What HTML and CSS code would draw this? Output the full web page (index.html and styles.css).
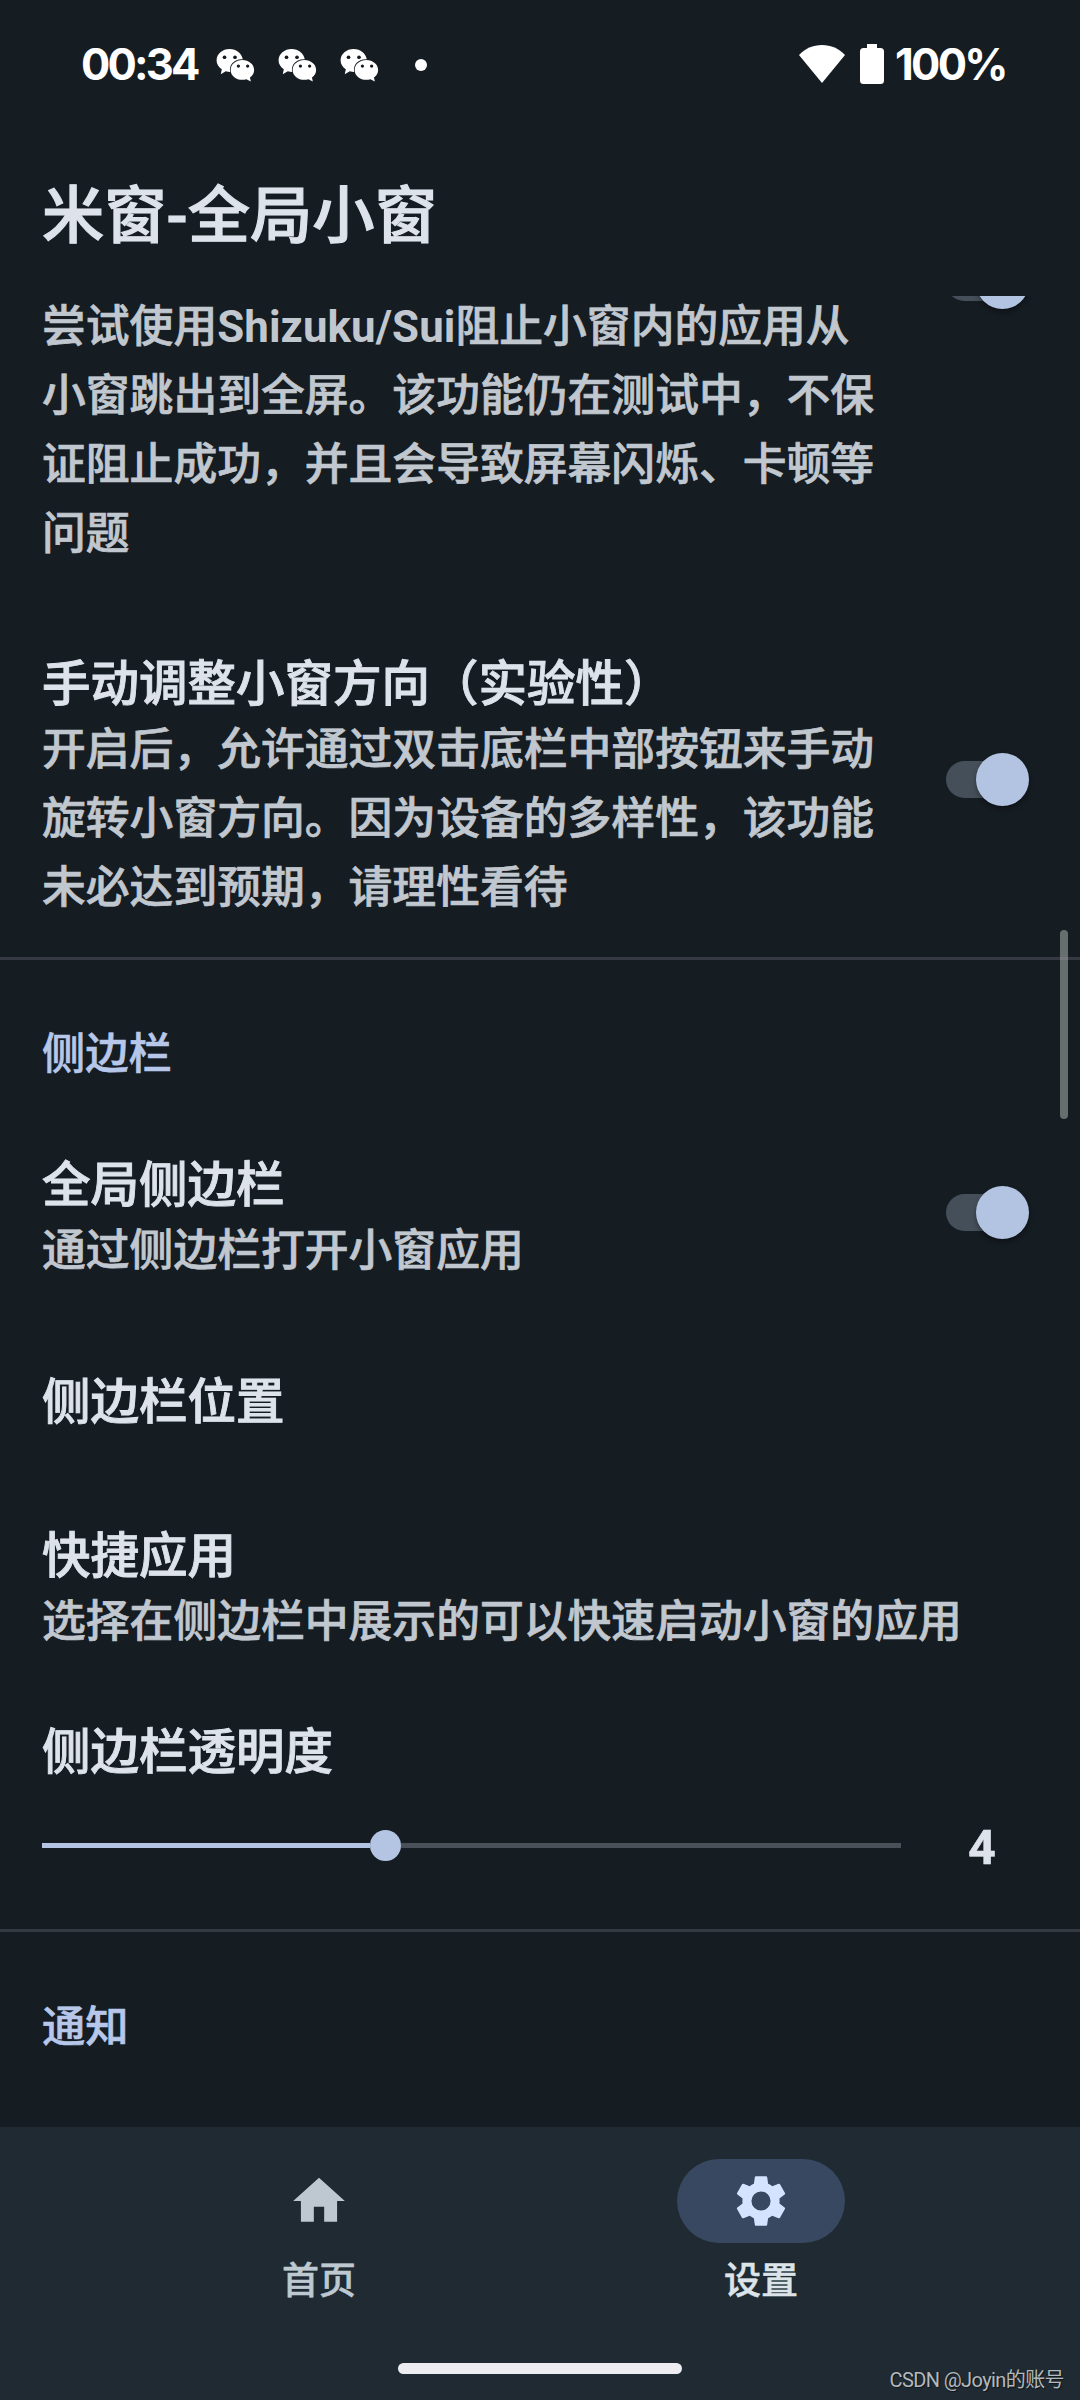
FILE: index.html
```html
<!DOCTYPE html>
<html lang="zh-CN">
<head>
<meta charset="utf-8">
<title>米窗-全局小窗</title>
<link rel="stylesheet" href="styles.css">
</head>
<body>
<svg class="defs" width="0" height="0">
  <symbol id="wechat" viewBox="0 0 39 34">
    <path fill="#fff" d="M13.500 0C6 0 0 5 0 11.700c0 3.800 2 7 5.400 9.200L4.300 26l5.200-3c1.500.400 3 .600 4.500.600C12.500 16 18.500 10 27 10.600 26 4.500 20.500 0 13.500 0z"/>
    <path fill="#fff" d="M26.500 11.400c-6.700 0-12 4.500-12 10.200s5.300 10.200 12 10.200c1.500 0 2.900-.200 4.200-.600l4.600 2.300-.900-4.100c2.700-1.900 4.300-4.700 4.300-7.800 0-5.700-5.400-10.200-12.200-10.200z"/>
    <g fill="#151c22"><circle cx="8.200" cy="8.500" r="1.900"/><circle cx="19" cy="8.500" r="1.900"/><circle cx="22.500" cy="17.600" r="1.700"/><circle cx="32" cy="17.600" r="1.700"/></g>
  </symbol>
</svg>
<div class="screen">
  <header class="status">
    <span class="clock">00:34</span>
    <div class="notices">
      <svg class="wechat"><use href="#wechat"/></svg>
      <svg class="wechat"><use href="#wechat"/></svg>
      <svg class="wechat"><use href="#wechat"/></svg>
    </div>
    <span class="more"></span>
    <div class="system">
      <svg class="wifi" viewBox="0 0 46 38"><path fill="#fff" d="M0 10C6 3.500 14 0 23 0s17 3.500 23 10L23 38z"/></svg>
      <svg class="battery" viewBox="0 0 24 40"><path fill="#fff" d="M7 0h10v4h3.500A3.500 3.500 0 0 1 24 7.500v29a3.500 3.500 0 0 1-3.500 3.500h-17A3.500 3.500 0 0 1 0 36.500v-29A3.500 3.500 0 0 1 3.500 4H7z"/></svg>
      <span class="percent">100%</span>
    </div>
  </header>
  <h1 class="title">米窗-全局小窗</h1>
  <main class="list">
    <section class="item item-first">
      <div class="text">
        <p class="desc">尝试使用<span class="latin">Shizuku/Sui</span>阻止小窗内的应用从<br>小窗跳出到全屏。该功能仍在测试中，不保<br>证阻止成功，并且会导致屏幕闪烁、卡顿等<br>问题</p>
      </div>
      <span class="toggle"></span>
    </section>
    <section class="item item-rotate">
      <div class="text">
        <h2 class="name">手动调整小窗方向（实验性）</h2>
        <p class="desc">开启后，允许通过双击底栏中部按钮来手动<br>旋转小窗方向。因为设备的多样性，该功能<br>未必达到预期，请理性看待</p>
      </div>
      <span class="toggle"></span>
    </section>
    <hr class="divider divider-a">
    <h3 class="group">侧边栏</h3>
    <section class="item item-sidebar">
      <div class="text">
        <h2 class="name">全局侧边栏</h2>
        <p class="desc">通过侧边栏打开小窗应用</p>
      </div>
      <span class="toggle"></span>
    </section>
    <section class="item item-position"><h2 class="name">侧边栏位置</h2></section>
    <section class="item item-apps">
      <div class="text">
        <h2 class="name">快捷应用</h2>
        <p class="desc">选择在侧边栏中展示的可以快速启动小窗的应用</p>
      </div>
    </section>
    <section class="item item-opacity"><h2 class="name">侧边栏透明度</h2></section>
    <div class="slider">
      <div class="rail"><span class="fill"></span><span class="knob"></span><span class="rest"></span></div>
      <span class="value">4</span>
    </div>
    <hr class="divider divider-b">
    <h3 class="group">通知</h3>
    <span class="scrollbar"></span>
  </main>
  <nav class="nav">
    <div class="tabs">
      <div class="tab">
        <span class="pill"><svg class="icon" viewBox="0 0 24 24"><path d="M10 20v-5.800h4V20h5v-8h3L12 3 2 12h3v8z"/></svg></span>
        <span class="tab-label">首页</span>
      </div>
      <div class="tab active">
        <span class="pill"><svg class="icon" viewBox="0 0 24 24"><path d="M19.140 12.940c.04-.300.060-.610.060-.940 0-.320-.020-.640-.070-.940l2.030-1.580a.490.490 0 0 0 .120-.610l-1.920-3.320a.488.488 0 0 0-.590-.220l-2.390.960c-.500-.380-1.030-.700-1.620-.940l-.360-2.540a.484.484 0 0 0-.480-.410h-3.840c-.240 0-.430.170-.470.410l-.360 2.540c-.590.240-1.130.570-1.620.940l-2.390-.960c-.220-.080-.470 0-.590.220L2.740 8.870c-.120.210-.080.470.120.610l2.030 1.580c-.050.300-.090.630-.090.940s.020.640.070.940l-2.030 1.580a.490.490 0 0 0-.120.610l1.920 3.320c.120.220.370.290.590.220l2.390-.960c.500.380 1.030.700 1.620.940l.360 2.540c.050.240.240.410.480.410h3.840c.240 0 .440-.170.470-.410l.360-2.540c.590-.240 1.130-.560 1.620-.940l2.390.960c.220.080.470 0 .590-.220l1.920-3.320c.120-.220.070-.470-.120-.610zM12 15.700a3.700 3.700 0 1 1 0-7.400 3.700 3.700 0 0 1 0 7.400z"/></svg></span>
        <span class="tab-label">设置</span>
      </div>
    </div>
    <span class="gesture"></span>
    <span class="watermark">CSDN @Joyin的账号</span>
  </nav>
</div>
</body>
</html>
```
FILE: styles.css
```css
* { box-sizing: border-box; margin: 0; padding: 0; }
body { background: #151c22; font-family: Roboto, "Noto Sans CJK SC", sans-serif; }
.defs { position: absolute; }
.screen { width: 1080px; height: 2400px; overflow: hidden; display: flex; flex-direction: column; }

.status { height: 128px; padding: 0 75px 0 81px; display: flex; align-items: center; color: #fff; font: 650 43.500px/50px Inter, sans-serif; }
.clock { width: 135px; letter-spacing: -2.800px; white-space: nowrap; }
.notices { display: flex; gap: 23px; padding-top: 2px; }
.wechat { width: 39px; height: 33px; display: block; }
.more { width: 12px; height: 12px; border-radius: 50%; background: #fff; margin: 2px 0 0 36px; }
.system { margin-left: auto; display: flex; align-items: center; }
.wifi { width: 46px; height: 38px; margin-right: 15px; }
.battery { width: 24px; height: 40px; margin-right: 11px; }
.percent { width: 110px; letter-spacing: -2.700px; white-space: nowrap; }

.title { height: 168px; padding: 47px 42px 0; color: #dee3eb; font-size: 62.300px; font-weight: 500; line-height: 84px; -webkit-text-stroke: 1.100px; }

.list { position: relative; height: 1831px; overflow: hidden; display: flex; flex-direction: column; flex: none; }
.item { display: flex; align-items: center; justify-content: space-between; padding: 0 51px 0 42px; flex: none; }
.name { color: #dee3eb; font-size: 48.500px; font-weight: 500; line-height: 63px; white-space: nowrap; -webkit-text-stroke: .9px; }
.desc { color: #c1c7ce; font-size: 43.800px; font-weight: 500; line-height: 69px; white-space: nowrap; -webkit-text-stroke: .7px; }
.latin { font-weight: 700; letter-spacing: .1px; -webkit-text-stroke: 0; }
.item-first { margin-top: -3px; align-items: flex-start; }
.item-first .toggle { margin-top: -37px; }
.item-rotate { margin-top: 84px; }
.item-rotate .toggle { margin-top: -17px; }
.item-sidebar { margin-top: 65px; }
.item-position { margin-top: 85px; }
.item-apps { margin-top: 91px; }
.item-opacity { margin-top: 64px; }

.toggle { width: 83px; height: 53px; margin-top: -16px; display: flex; align-items: center; justify-content: flex-end; flex: none; }
.toggle::before { content: ""; width: 72px; height: 37px; margin-right: -42px; border-radius: 19px; background: #454f5a; flex: none; }
.toggle::after { content: ""; width: 53px; height: 53px; border-radius: 50%; background: #b2c4e2; box-shadow: 0 3px 5px rgba(0, 0, 0, .35); flex: none; z-index: 1; }

.divider { height: 3px; border: 0; background: #353941; flex: none; }
.divider-a { margin: 34px 0 60px; }
.divider-b { margin: 53px 0 61px; }
.group { padding-left: 42px; color: #b6c7e9; font-size: 43.300px; font-weight: 500; line-height: 69px; -webkit-text-stroke: .6px; }

.slider { height: 61px; margin-top: 31px; padding: 0 42px; display: flex; align-items: center; flex: none; }
.rail { width: 859px; display: flex; align-items: center; }
.fill { width: 328px; height: 5px; background: #b4c5e4; }
.knob { width: 31px; height: 31px; border-radius: 50%; background: #b4c5e4; }
.rest { flex: 1; height: 5px; background: #495057; }
.value { margin-left: 67px; padding-top: 4px; color: #dee3eb; font-size: 48.500px; font-weight: 700; line-height: 56px; -webkit-text-stroke: .5px; }
.scrollbar { position: absolute; right: 12px; top: 634px; width: 8px; height: 189px; border-radius: 4px; background: rgba(160, 163, 160, .6); }

.nav { position: relative; height: 273px; background: #1f2a32; display: flex; flex-direction: column; align-items: center; flex: none; }
.tabs { display: flex; height: 236px; padding-top: 32px; }
.tab { width: 442px; display: flex; flex-direction: column; align-items: center; gap: 12px; color: #bdc8d0; }
.pill { width: 168px; height: 84px; border-radius: 42px; display: flex; align-items: center; justify-content: center; }
.icon { width: 62px; height: 62px; margin: 0 1px 1px 0; fill: currentColor; }
.active .icon { color: #d4e3ff; }
.active .pill { background: #384860; }
.tab-label { font-size: 37px; font-weight: 500; line-height: 54px; -webkit-text-stroke: .5px; }
.active .tab-label { color: #dce4ea; }
.gesture { width: 284px; height: 11px; border-radius: 6px; background: #ededf1; }
.watermark { position: absolute; right: 16px; bottom: 6px; color: #b4b8bb; font-size: 20px; letter-spacing: -.6px; line-height: 28px; text-shadow: 1px 1px 1px rgba(0, 0, 0, .5); white-space: nowrap; }
```
